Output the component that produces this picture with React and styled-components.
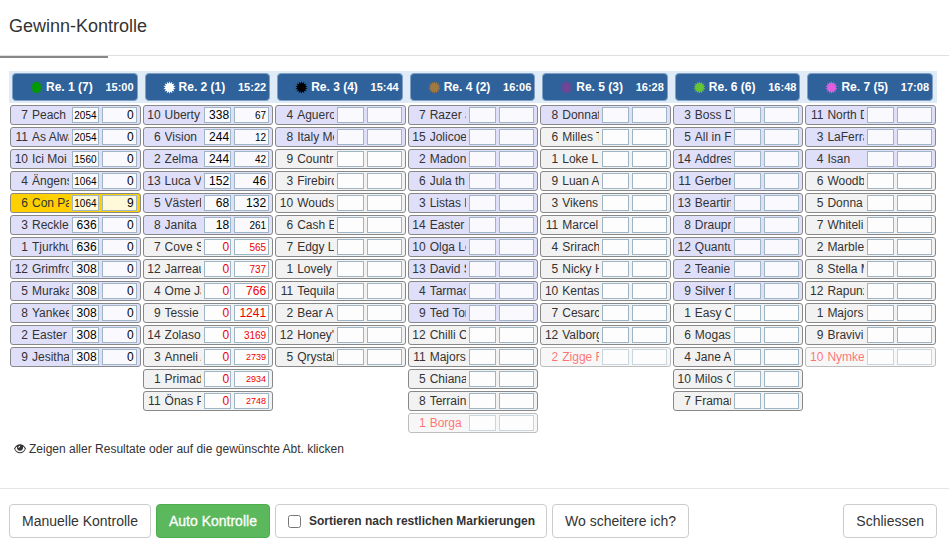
import React, { useState } from 'react'
import styled, { createGlobalStyle } from 'styled-components'

const GlobalStyle = createGlobalStyle`
  *, *::before, *::after { box-sizing: border-box; }
  body {
    margin: 0;
    background: #fff;
    color: #333;
    font-family: "Liberation Sans", Arial, sans-serif;
    font-size: 12px;
  }
`

const Modal = styled.div`
  display: flex;
  flex-direction: column;
`

const Header = styled.header`
  padding: 16px 9px 19px;
  border-bottom: 1px solid #e0e0e0;
`

const Title = styled.h4`
  margin: 0;
  font-size: 18px;
  line-height: 20px;
  font-weight: 400;
`

const Progress = styled.div`
  width: 108px;
  height: 2px;
  background: #888;
`

const Body = styled.main`
  padding: 13px 12px 31px 9px;
`

const RaceTable = styled.table`
  width: 100%;
  table-layout: fixed;
  border-collapse: collapse;
`

const RaceHead = styled.th`
  padding: 2px 4px 2px 3px;
  background: #dfebf7;
`

const RaceButton = styled.button`
  display: flex;
  align-items: center;
  width: 100%;
  height: 28px;
  padding: 0 3px 0 17px;
  border: 1px solid #7f9fc4;
  border-radius: 4px;
  background: #2f629b;
  color: #fff;
  font-family: inherit;
  font-size: 12px;
  font-weight: 700;
  cursor: pointer;
`

const RaceName = styled.span`
  margin-left: 3px;
`

const RaceTime = styled.span`
  margin-left: auto;
  font-size: 11px;
`

const RaceCell = styled.td`
  padding: 2px 1px 0;
  vertical-align: top;
`

const rowColors = {
  marked: '#dfdff9',
  plain: '#f2f2f2',
  winner: '#ffd000',
  scratched: '#f2f2f2',
}

const Horses = styled.ul`
  display: flex;
  flex-direction: column;
  gap: 2px;
  margin: 0;
  padding: 0;
  list-style: none;
`

const Row = styled.li`
  display: flex;
  align-items: center;
  height: 20px;
  padding-right: 3px;
  border: 1px solid #888;
  border-radius: 3px;
  background: ${({ $kind }) => rowColors[$kind]};
  color: ${({ $kind }) => ($kind === 'scratched' ? '#f00' : '#333')};
  opacity: ${({ $kind }) => ($kind === 'scratched' ? 0.55 : 1)};
`

const Num = styled.span`
  width: 17px;
  margin-right: 4px;
  text-align: right;
`

const Name = styled.span`
  flex: 1;
  min-width: 0;
  margin-right: 3px;
  overflow: hidden;
  white-space: nowrap;
`

const Value = styled.input`
  width: ${({ $wide }) => ($wide ? 35 : 27)}px;
  height: 16px;
  margin-left: ${({ $wide }) => ($wide ? 3 : 0)}px;
  padding: 0 ${({ $wide }) => ($wide ? 2 : 1)}px;
  border: 1px solid #9db5c4;
  border-radius: 0;
  background: rgba(255, 255, 255, 0.85);
  color: ${({ $red }) => ($red ? '#e00' : '#000')};
  font-family: inherit;
  font-size: ${({ $size }) => $size}px;
  text-align: right;
  outline: none;
`

const Note = styled.p`
  display: flex;
  align-items: center;
  gap: 3px;
  margin: 8px 0 0 5px;
  line-height: 16px;
`

const Footer = styled.footer`
  display: flex;
  gap: 5px;
  padding: 15px 12px 7px 9px;
  border-top: 1px solid #e5e5e5;
`

const Button = styled.button`
  height: 34px;
  padding: 0 12px;
  border: 1px solid ${({ $success }) => ($success ? '#4cae4c' : '#ccc')};
  border-radius: 4px;
  background: ${({ $success }) => ($success ? '#5cb85c' : '#fff')};
  color: ${({ $success }) => ($success ? '#fff' : '#333')};
  font-family: inherit;
  font-size: 14px;
  white-space: nowrap;
  cursor: pointer;
  -webkit-text-stroke: ${({ $success }) => ($success ? '0.3px #fff' : '0')};
`

const CloseButton = styled(Button)`
  margin-left: auto;
`

const SortLabel = styled.label`
  display: flex;
  align-items: center;
  height: 34px;
  padding: 0 11px 0 12px;
  border: 1px solid #ccc;
  border-radius: 4px;
  font-weight: 700;
  white-space: nowrap;
`

const Checkbox = styled.input`
  width: 13px;
  height: 13px;
  margin: 0 8px 0 0;
`

const burst = Array.from({ length: 28 }, (_, i) => {
  const r = i % 2 ? 4 : 6.3
  const a = (Math.PI * i) / 14
  return `${(6.5 + r * Math.sin(a)).toFixed(2)},${(6.5 - r * Math.cos(a)).toFixed(2)}`
}).join(' ')

const Burst = ({ color }) => (
  <svg width="13" height="13" viewBox="0 0 13 13" aria-hidden="true">
    <polygon points={burst} fill={color} />
  </svg>
)

const Eye = () => (
  <svg width="12" height="12" viewBox="0 0 12 12" aria-hidden="true">
    <path d="M0 5.500C1.600 2.800 3.600 1.300 6 1.300S10.400 2.800 12 5.500C10.400 8.900 8.400 10.300 6 10.300S1.600 8.900 0 5.500Z" fill="#333" />
    <path d="M1.100 6C1.600 4.900 2.200 4 3 3.400C2.700 5.800 3.700 7.800 6 7.800S9.300 5.800 9 3.400C9.800 4 10.400 4.900 10.900 6C9.600 8.200 8 9.200 6 9.200S2.400 8.200 1.100 6Z" fill="#fff" />
    <path d="M4.200 5C4.200 3.800 4.900 3 5.900 2.800L6.100 3.700C5.400 3.900 5 4.300 5 5Z" fill="#fff" />
  </svg>
)

// horse: [number, name, kind, left value, right value]
// kind: m = marked, w = winner, x = scratched, nothing = plain
const races = [
  {
    name: 'Re. 1 (7)', time: '15:00', color: '#009a00',
    horses: [
      [7, 'Peach', 'm', 2054, 0],
      [11, 'As Alwa', 'm', 2054, 0],
      [10, 'Ici Moi', 'm', 1560, 0],
      [4, 'Ängens', 'm', 1064, 0],
      [6, 'Con Pa', 'w', 1064, 9],
      [3, 'Reckle', 'm', 636, 0],
      [1, 'Tjurkhu', 'm', 636, 0],
      [12, 'Grimfro', 'm', 308, 0],
      [5, 'Muraka', 'm', 308, 0],
      [8, 'Yankee', 'm', 308, 0],
      [2, 'Easter', 'm', 308, 0],
      [9, 'Jesitha', 'm', 308, 0],
    ],
  },
  {
    name: 'Re. 2 (1)', time: '15:22', color: '#fff',
    horses: [
      [10, 'Uberty', 'm', 338, 67],
      [6, 'Vision', 'm', 244, 12],
      [2, 'Zelma', 'm', 244, 42],
      [13, 'Luca V', 'm', 152, 46],
      [5, 'Västerb', 'm', 68, 132],
      [8, 'Janita', 'm', 18, 261],
      [7, 'Cove S', '', 0, 565],
      [12, 'Jarreau', '', 0, 737],
      [4, 'Ome Ja', '', 0, 766],
      [9, 'Tessie', '', 0, 1241],
      [14, 'Zolaso', '', 0, 3169],
      [3, 'Anneli A', '', 0, 2739],
      [1, 'Primad', '', 0, 2934],
      [11, 'Önas P', '', 0, 2748],
    ],
  },
  {
    name: 'Re. 3 (4)', time: '15:44', color: '#000',
    horses: [
      [4, 'Aguero', 'm'],
      [8, 'Italy Me', 'm'],
      [9, 'Countr'],
      [3, 'Firebird'],
      [10, 'Wouds'],
      [6, 'Cash E'],
      [7, 'Edgy L'],
      [1, 'Lovely'],
      [11, 'Tequila'],
      [2, 'Bear A'],
      [12, "Honey'"],
      [5, 'Qrystal'],
    ],
  },
  {
    name: 'Re. 4 (2)', time: '16:06', color: '#a07840',
    horses: [
      [7, 'Razer a', 'm'],
      [15, 'Jolicoe', 'm'],
      [2, 'Madon', 'm'],
      [6, 'Jula th', 'm'],
      [3, 'Listas B', 'm'],
      [14, 'Easter', 'm'],
      [10, 'Olga Lo', 'm'],
      [13, 'David S', 'm'],
      [4, 'Tarmac', 'm'],
      [9, 'Ted Tor', 'm'],
      [12, 'Chilli C'],
      [11, 'Majors'],
      [5, 'Chiana'],
      [8, 'Terrain'],
      [1, 'Borga', 'x'],
    ],
  },
  {
    name: 'Re. 5 (3)', time: '16:28', color: '#6f4596',
    horses: [
      [8, 'Donnat', 'm'],
      [6, 'Milles T'],
      [1, 'Loke L'],
      [9, 'Luan A'],
      [3, 'Vikens'],
      [11, 'Marcel'],
      [4, 'Srirach'],
      [5, 'Nicky H'],
      [10, 'Kentas'],
      [7, 'Cesarc'],
      [12, 'Valborg'],
      [2, 'Zigge F', 'x'],
    ],
  },
  {
    name: 'Re. 6 (6)', time: '16:48', color: '#66c535',
    horses: [
      [3, 'Boss D', 'm'],
      [5, 'All in F', 'm'],
      [14, 'Addres', 'm'],
      [11, 'Gerber', 'm'],
      [13, 'Beartin', 'm'],
      [8, 'Draupr', 'm'],
      [12, 'Quantu', 'm'],
      [2, 'Teanie', 'm'],
      [9, 'Silver B', 'm'],
      [1, 'Easy C'],
      [6, 'Mogas'],
      [4, 'Jane A'],
      [10, 'Milos C'],
      [7, 'Framar'],
    ],
  },
  {
    name: 'Re. 7 (5)', time: '17:08', color: '#e05fe0',
    horses: [
      [11, 'North D', 'm'],
      [3, 'LaFerra', 'm'],
      [4, 'Isan', 'm'],
      [6, 'Woodb'],
      [5, 'Donna'],
      [7, 'Whiteli'],
      [2, 'Marble'],
      [8, 'Stella M'],
      [12, 'Rapunz'],
      [1, 'Majors'],
      [9, 'Bravivi'],
      [10, 'Nymke', 'x'],
    ],
  },
]

const kinds = { m: 'marked', w: 'winner', x: 'scratched' }

const leftSize = (value) => (value > 999 ? 10 : 12)

const rightSize = (value) => {
  if ([2739, 2934, 2748].includes(value)) return 9
  return [67, 12, 42, 261, 565, 737, 3169].includes(value) ? 10 : 12
}

function Horse({ horse }) {
  const [number, name, kind, left, right] = horse
  const red = left === 0
  return (
    <Row $kind={kinds[kind] || 'plain'}>
      <Num>{number}</Num>
      <Name>{name}</Name>
      <Value readOnly aria-label={`${name} Anzahl`} value={left ?? ''} $size={leftSize(left)} $red={red} />
      <Value readOnly $wide aria-label={`${name} Wert`} value={right ?? ''} $size={rightSize(right)} $red={red} />
    </Row>
  )
}

function App() {
  const [sorted, setSorted] = useState(false)

  return (
    <Modal>
      <GlobalStyle />
      <Header>
        <Title>Gewinn-Kontrolle</Title>
      </Header>
      <Progress />
      <Body>
        <RaceTable>
          <thead>
            <tr>
              {races.map((race) => (
                <RaceHead key={race.name} scope="col">
                  <RaceButton type="button">
                    <Burst color={race.color} />
                    <RaceName>{race.name}</RaceName>
                    <RaceTime>{race.time}</RaceTime>
                  </RaceButton>
                </RaceHead>
              ))}
            </tr>
          </thead>
          <tbody>
            <tr>
              {races.map((race) => (
                <RaceCell key={race.name}>
                  <Horses>
                    {race.horses.map((horse) => <Horse key={horse[0]} horse={horse} />)}
                  </Horses>
                </RaceCell>
              ))}
            </tr>
          </tbody>
        </RaceTable>
        <Note>
          <Eye />
          Zeigen aller Resultate oder auf die gewünschte Abt. klicken
        </Note>
      </Body>
      <Footer>
        <Button type="button">Manuelle Kontrolle</Button>
        <Button type="button" $success>Auto Kontrolle</Button>
        <SortLabel htmlFor="sort">
          <Checkbox id="sort" type="checkbox" checked={sorted} onChange={() => setSorted(!sorted)} />
          Sortieren nach restlichen Markierungen
        </SortLabel>
        <Button type="button">Wo scheitere ich?</Button>
        <CloseButton type="button">Schliessen</CloseButton>
      </Footer>
    </Modal>
  )
}

export default App
